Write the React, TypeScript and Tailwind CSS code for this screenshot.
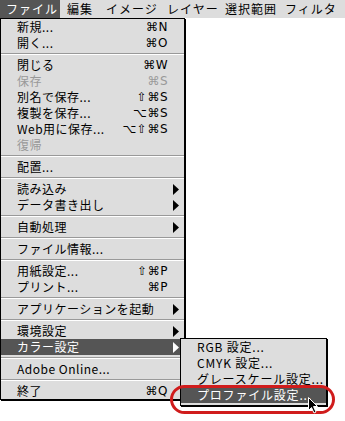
import React from "react";

type Item =
  | "sep"
  | { label: string; key?: string; disabled?: boolean; sub?: boolean; active?: boolean };

const fileMenu: Item[] = [
  { label: "新規...", key: "⌘N" },
  { label: "開く...", key: "⌘O" },
  "sep",
  { label: "閉じる", key: "⌘W" },
  { label: "保存", key: "⌘S", disabled: true },
  { label: "別名で保存...", key: "⇧⌘S" },
  { label: "複製を保存...", key: "⌥⌘S" },
  { label: "Web用に保存...", key: "⌥⇧⌘S" },
  { label: "復帰", disabled: true },
  "sep",
  { label: "配置..." },
  "sep",
  { label: "読み込み", sub: true },
  { label: "データ書き出し", sub: true },
  "sep",
  { label: "自動処理", sub: true },
  "sep",
  { label: "ファイル情報..." },
  "sep",
  { label: "用紙設定...", key: "⇧⌘P" },
  { label: "プリント...", key: "⌘P" },
  "sep",
  { label: "アプリケーションを起動", sub: true },
  "sep",
  { label: "環境設定", sub: true },
  { label: "カラー設定", sub: true, active: true },
  "sep",
  { label: "Adobe Online..." },
  "sep",
  { label: "終了", key: "⌘Q" },
];

const colorMenu = ["RGB 設定...", "CMYK 設定...", "グレースケール設定...", "プロファイル設定..."];

const titles = [
  { label: "ファイル", w: "w-[60px]", pl: "pl-[6px]" },
  { label: "編集", w: "w-[40px]", pl: "pl-[7px]" },
  { label: "イメージ", w: "w-[61px]", pl: "pl-[6px]" },
  { label: "レイヤー", w: "w-[58px]", pl: "pl-[6px]" },
  { label: "選択範囲", w: "w-[60px]", pl: "pl-[6px]" },
  { label: "フィルタ", w: "w-[66px]", pl: "pl-[6px]" },
];

const Arrow = ({ white }: { white?: boolean }) => (
  <svg width="6" height="11" viewBox="0 0 6 11">
    <polygon points="0,0 6,5.5 0,11" fill={white ? "#fff" : "#000"} />
  </svg>
);

const Sep = () => (
  <div className="h-[6px] flex flex-col justify-center">
    <div className="h-px bg-[#999]" />
    <div className="h-px bg-white" />
  </div>
);

const App = () => {
  return (
    <div className="relative w-[345px] h-[421px] bg-white overflow-hidden font-['Noto_Sans_CJK_JP',sans-serif] text-[12px] leading-4 text-black">
      {/* menu bar */}
      <div className="h-[18px] bg-[#dddddd] flex whitespace-nowrap">
        {titles.map((t, i) => (
          <div
            key={t.label}
            className={`${t.w} ${t.pl} shrink-0 h-full flex items-center tracking-[1px] ${
              i === 0 ? "bg-[#555555] text-white" : ""
            }`}
          >
            {t.label}
          </div>
        ))}
      </div>

      {/* file menu */}
      <div className="absolute left-0 top-[18px] w-[185px] border border-black bg-[#dddddd] shadow-[1px_1px_0_#000]">
        {fileMenu.map((it, i) =>
          it === "sep" ? (
            <Sep key={i} />
          ) : (
            <div
              key={i}
              className={`h-4 flex items-center pl-4 whitespace-nowrap ${
                it.active ? "bg-[#555555] text-white" : it.disabled ? "text-[#999999]" : ""
              }`}
            >
              <span className="flex-1 tracking-[0.5px]">{it.label}</span>
              {it.key && (
                <span className="font-['DejaVu_Sans',sans-serif] text-[12px] tracking-[0.5px]">
                  {it.key}
                </span>
              )}
              <span className="w-4 pl-[5px] flex items-center">
                {it.sub && <Arrow white={it.active} />}
              </span>
            </div>
          )
        )}
      </div>

      {/* color submenu */}
      <div className="absolute left-[180px] top-[338px] w-[147px] border border-black bg-[#dddddd] shadow-[1px_1px_0_#000] pb-[2px]">
        {colorMenu.map((l, i) => (
          <div
            key={l}
            className={`h-4 flex items-center pl-4 whitespace-nowrap tracking-[0.8px] ${
              i === 3 ? "bg-[#555555] text-white" : ""
            }`}
          >
            {l}
          </div>
        ))}
      </div>

      {/* red mark */}
      <div className="absolute left-[170px] top-[385px] w-[165px] h-[29px] rounded-full border-[3px] border-[#d01c1c]" />

      {/* cursor */}
      <svg className="absolute left-[308px] top-[397px]" width="11" height="17" viewBox="0 0 11 17">
        <path d="M0.5 0.5 L0.5 13.5 L3.5 10.5 L6 16 L8 15 L5.5 9.5 L9.5 9.5 Z" fill="#000" stroke="#fff" strokeWidth="1" />
      </svg>
    </div>
  );
};

export default App;
